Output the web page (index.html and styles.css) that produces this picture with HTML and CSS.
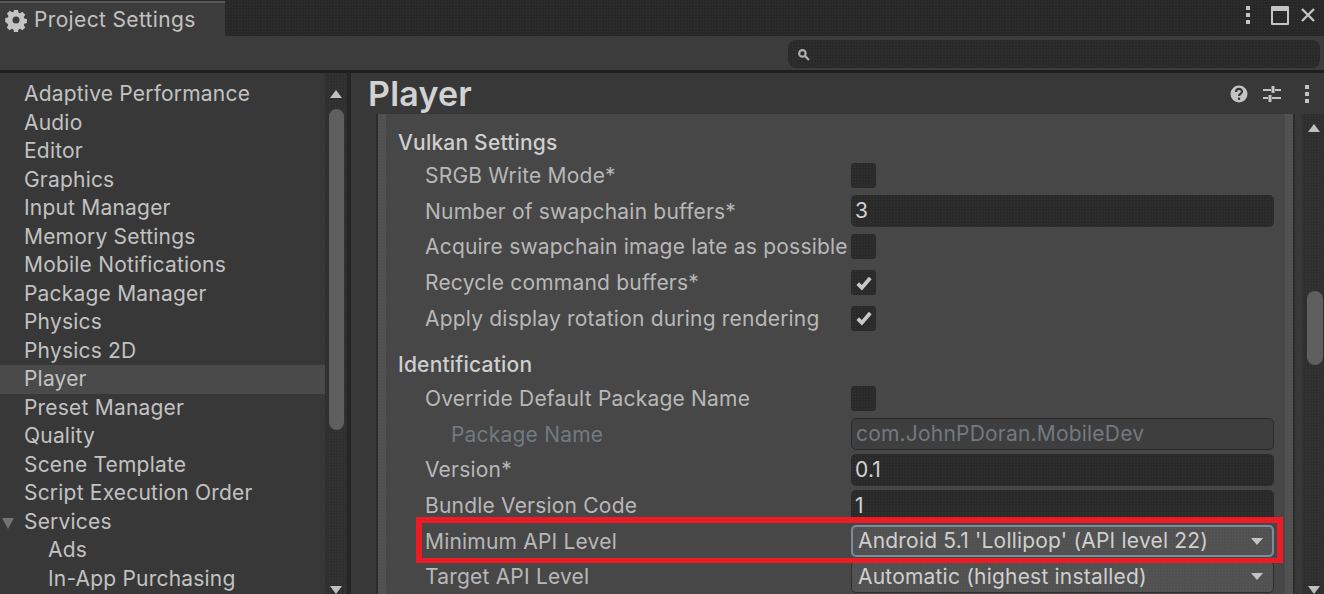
FILE: index.html
```html
<!DOCTYPE html>
<html lang="en">
<head>
    <meta charset="UTF-8">
    <title>Project Settings</title>
    <link rel="stylesheet" href="styles.css">
</head>
<body>
    <div class="window">
        <div class="tabbar">
            <div class="tab">
                <svg class="gear" viewBox="0 0 24 24"><path fill-rule="evenodd" d="M9.600 0h4.800l.7 3.300 1.700.7 2.900-1.800 3.400 3.400-1.800 2.900.7 1.700 3.100.7v4.800l-3.100.7-.7 1.700 1.800 2.900-3.400 3.400-2.900-1.800-1.700.7-.7 3.100H9.600l-.7-3.100-1.700-.7-2.900 1.800-3.400-3.400 1.800-2.900-.7-1.700L-.9 14.400V9.600l3.100-.7.7-1.700L1.100 4.300l3.400-3.400 2.900 1.800 1.700-.7zM12 7.800a4.200 4.200 0 1 0 0 8.400 4.200 4.200 0 0 0 0-8.400z"/></svg>
                <span>Project Settings</span>
            </div>
            <div class="win-buttons">
                <span class="dots"><i></i><i></i><i></i></span>
                <span class="maximize"></span>
                <svg class="close" viewBox="0 0 16 16"><path d="M2 2l12 12M14 2L2 14"/></svg>
            </div>
        </div>
        <div class="toolbar">
            <div class="search">
                <svg class="search-icon" viewBox="0 0 12 12"><circle cx="5" cy="5" r="3"/><path d="M7.500 7.500L11 11"/></svg>
            </div>
        </div>
        <div class="main">
            <aside class="sidebar">
                <ul class="nav">
                    <li>Adaptive Performance</li>
                    <li>Audio</li>
                    <li>Editor</li>
                    <li>Graphics</li>
                    <li>Input Manager</li>
                    <li>Memory Settings</li>
                    <li>Mobile Notifications</li>
                    <li>Package Manager</li>
                    <li>Physics</li>
                    <li>Physics 2D</li>
                    <li class="selected">Player</li>
                    <li>Preset Manager</li>
                    <li>Quality</li>
                    <li>Scene Template</li>
                    <li>Script Execution Order</li>
                    <li class="has-children">Services</li>
                    <li class="child">Ads</li>
                    <li class="child">In-App Purchasing</li>
                </ul>
                <div class="scrollbar">
                    <span class="arrow up"></span>
                    <div class="track"><div class="thumb thumb-nav"></div></div>
                    <span class="arrow down"></span>
                </div>
            </aside>
            <section class="content">
                <header class="content-head">
                    <h1>Player</h1>
                    <div class="head-icons">
                        <svg class="help" viewBox="0 0 18 18"><circle cx="9" cy="9" r="8.500"/><path class="help-mark" d="M6 7c0-4 6-4 6-.5 0 2.500-3 2.300-3 4.500"/><circle class="help-dot" cx="9" cy="13.700" r="1.300"/></svg>
                        <svg class="sliders" viewBox="0 0 20 18"><path d="M1 5h8M13 5h6M1 13h5M10 13h9"/><path class="knob" d="M11 1v7M8 10v7"/></svg>
                        <span class="dots"><i></i><i></i><i></i></span>
                    </div>
                </header>
                <div class="inspector">
                    <div class="band">
                        <div class="form">
                            <h2>Vulkan Settings</h2>
                            <div class="row"><label>SRGB Write Mode*</label><span class="check"></span></div>
                            <div class="row"><label>Number of swapchain buffers*</label><div class="field">3</div></div>
                            <div class="row"><label>Acquire swapchain image late as possible</label><span class="check"></span></div>
                            <div class="row"><label>Recycle command buffers*</label><span class="check on"><svg viewBox="0 0 16 16"><path d="M3 8.500l3.300 3.300L13 4"/></svg></span></div>
                            <div class="row"><label>Apply display rotation during rendering</label><span class="check on"><svg viewBox="0 0 16 16"><path d="M3 8.500l3.300 3.300L13 4"/></svg></span></div>
                            <h2 class="second">Identification</h2>
                            <div class="row"><label>Override Default Package Name</label><span class="check"></span></div>
                            <div class="row disabled"><label class="indent">Package Name</label><div class="field">com.JohnPDoran.MobileDev</div></div>
                            <div class="row"><label>Version*</label><div class="field">0.1</div></div>
                            <div class="row"><label>Bundle Version Code</label><div class="field">1</div></div>
                            <div class="row highlighted"><label>Minimum API Level</label><div class="select focus">Android 5.1 'Lollipop' (API level 22)<span class="caret"></span></div></div>
                            <div class="row"><label>Target API Level</label><div class="select">Automatic (highest installed)<span class="caret"></span></div></div>
                        </div>
                    </div>
                </div>
                <div class="scrollbar">
                    <span class="arrow up"></span>
                    <div class="track"><div class="thumb thumb-main"></div></div>
                    <span class="arrow down"></span>
                </div>
            </section>
        </div>
    </div>
</body>
</html>
```

FILE: styles.css
```css
* {
    box-sizing: border-box;
}

html, body {
    height: 100%;
    margin: 0;
    overflow: hidden;
}

body {
    font-family: 'Inter', 'Liberation Sans', sans-serif;
    background-color: #383838;
    color: #c2c2c2;
    letter-spacing: .2px;
}

.window {
    display: flex;
    flex-direction: column;
    height: 594px;
}

/* the screenshot has a fine dither over the darker parts */
.tabbar, .scrollbar, .search, .field, .check, .band, .select {
    background-image: radial-gradient(rgba(255, 255, 255, .05) .6px, transparent .8px);
    background-size: 3px 3px;
}

.tabbar {
    display: flex;
    justify-content: space-between;
    height: 36px;
    background-color: #282828;
}

.tab {
    display: flex;
    align-items: center;
    gap: 8px;
    width: 225px;
    margin-top: 1px;
    padding-left: 6px;
    background-color: #3c3c3c;
    border-top: 2px solid #585858;
    font-size: 21px;
    letter-spacing: .35px;
}

.gear {
    width: 20px;
    height: 20px;
    fill: #c4c4c4;
    overflow: visible;
}

.win-buttons {
    display: flex;
    align-items: center;
    padding: 0 8px 6px 0;
}

.win-buttons .dots {
    margin-right: 21px;
}

.dots {
    display: flex;
    flex-direction: column;
    gap: 3px;
}

.dots i {
    width: 4px;
    height: 4px;
    background-color: #c4c4c4;
}

.maximize {
    width: 18px;
    height: 19px;
    margin-right: 11px;
    border: 2px solid #c4c4c4;
    border-top-width: 5px;
    border-radius: 1px;
}

.close {
    width: 16px;
    height: 16px;
    stroke: #c4c4c4;
    stroke-width: 2.400;
}

.toolbar {
    display: flex;
    justify-content: flex-end;
    height: 37px;
    padding: 4px 4px 0 0;
    background-color: #3c3c3c;
    border-bottom: 3px solid #1f1f1f;
}

.search {
    display: flex;
    align-items: center;
    width: 532px;
    height: 28px;
    padding-left: 9px;
    background-color: #2a2a2a;
    border-radius: 8px;
}

.search-icon {
    width: 13px;
    height: 13px;
    fill: none;
    stroke: #b0b0b0;
    stroke-width: 2;
}

.main {
    display: flex;
    flex: 1;
    min-height: 0;
}

.sidebar {
    display: flex;
    width: 351px;
    border-right: 4px solid #252525;
}

.nav {
    flex: 1;
    margin: 0;
    padding: 7px 0 0;
    list-style: none;
    font-size: 21px;
    line-height: 28.500px;
}

.nav li {
    padding-left: 24px;
}

.nav .selected {
    background-color: #4a4a4a;
}

.nav .child {
    padding-left: 48px;
}

.nav .has-children {
    position: relative;
}

.nav .has-children::before {
    content: "";
    position: absolute;
    left: 2px;
    top: 10px;
    border: 6px solid transparent;
    border-top: 11px solid #727272;
    border-bottom: 0;
}

.scrollbar {
    display: flex;
    flex-direction: column;
    align-items: center;
    width: 22px;
    flex-shrink: 0;
    background-color: #2f2f2f;
}

.track {
    flex: 1;
    width: 100%;
    padding: 0 3px 0 4px;
}

.arrow {
    flex-shrink: 0;
    margin: 17px 0 11px;
    border: 6px solid transparent;
}

.arrow.up {
    border-bottom: 8px solid #c0c0c0;
    border-top: 0;
}

.arrow.down {
    margin: 6px 0 0;
    border-top: 8px solid #c0c0c0;
    border-bottom: 0;
}

.thumb {
    background-color: #5f5f5f;
    border-radius: 8px;
}

.thumb-nav {
    height: 321px;
}

.thumb-main {
    height: 74px;
    margin-top: 148px;
}

.content {
    display: flex;
    flex: 1;
    flex-wrap: wrap;
    min-width: 0;
    position: relative;
}

.content > .scrollbar {
    position: absolute;
    top: 41px;
    right: 0;
    bottom: 0;
    padding-left: 2px;
}

.content > .scrollbar .arrow.up {
    margin-top: 10px;
}

.content > .scrollbar .track {
    padding: 0 1px 0 3px;
}

.content-head {
    display: flex;
    align-items: center;
    justify-content: space-between;
    width: 100%;
    height: 41px;
    padding: 0 15px 0 17px;
}

h1 {
    margin: 0;
    font-size: 34px;
    font-weight: 600;
    color: #d2d2d2;
}

.head-icons {
    display: flex;
    align-items: center;
}

.help {
    width: 18px;
    height: 18px;
    margin-right: 14px;
}

.help circle {
    fill: #c4c4c4;
}

.help .help-mark {
    fill: none;
    stroke: #383838;
    stroke-width: 2.200;
}

.help .help-dot {
    fill: #383838;
}

.sliders {
    width: 20px;
    height: 18px;
    margin-right: 23px;
    fill: none;
    stroke: #c4c4c4;
    stroke-width: 2;
}

.sliders .knob {
    stroke-width: 3;
}

.inspector {
    width: 100%;
    height: 480px;
    padding: 0 29px 0 25px;
    overflow: hidden;
}

.band {
    height: 100%;
    padding: 0 8px;
    background-color: #505050;
    border-left: 2px solid #2c2c2c;
    border-right: 2px solid #2c2c2c;
}

.form {
    height: 100%;
    padding: 11px 11px 0 12px;
    background-color: #474747;
}

h2 {
    margin: 0;
    height: 33px;
    font-size: 21px;
    line-height: 36px;
    font-weight: 500;
    color: #cfcfcf;
}

h2.second {
    height: 45px;
    padding-top: 11px;
}

.row {
    display: flex;
    align-items: center;
    height: 35.600px;
    font-size: 21px;
}

.row label {
    flex: 0 0 453px;
    padding-left: 27px;
    white-space: nowrap;
    color: #b8b8b8;
}

.row label.indent {
    padding-left: 53px;
}

.check {
    display: flex;
    align-items: center;
    justify-content: center;
    width: 25px;
    height: 25px;
    background-color: #2a2a2a;
    border-radius: 3px;
}

.check svg {
    width: 20px;
    height: 20px;
    fill: none;
    stroke: #c8c8c8;
    stroke-width: 3;
}

.field, .select {
    flex: 1;
    height: 32px;
    padding-left: 4px;
    line-height: 32px;
    border-radius: 5px;
}

.field {
    background-color: #2a2a2a;
    color: #d2d2d2;
}

.disabled label {
    color: #717a80;
}

.disabled .field {
    background-color: #3e3e3e;
    background-image: none;
    border: 1px solid #2a2a2a;
    line-height: 30px;
    color: #717a80;
}

.select {
    display: flex;
    justify-content: space-between;
    align-items: center;
    padding: 0 10px 0 6px;
    background-color: #515151;
    border: 1px solid #2f2f2f;
    color: #cfcfcf;
}

.select.focus {
    border: 2px solid #7c8c9c;
    padding: 0 9px 0 5px;
}

.caret {
    border: 6px solid transparent;
    border-top: 7px solid #c4c4c4;
    border-bottom: 0;
}

.highlighted {
    position: relative;
}

.highlighted::after {
    content: "";
    position: absolute;
    left: 18px;
    right: -9px;
    top: -6px;
    bottom: -4px;
    border: 6px solid #ed1c24;
    border-bottom-width: 5px;
    pointer-events: none;
}
```
